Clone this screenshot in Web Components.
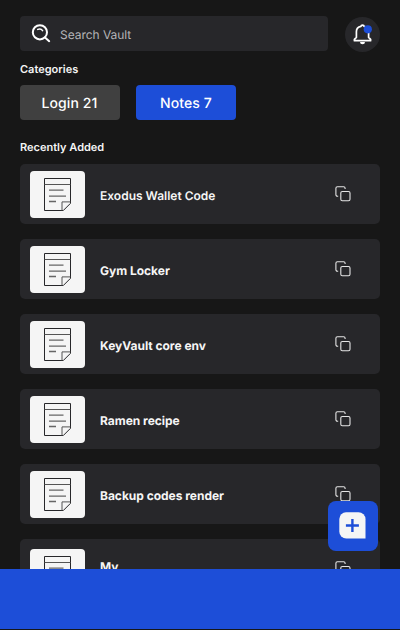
<!DOCTYPE html>
<html lang="en">
<head>
<meta charset="utf-8">
<title>Vault</title>
<style>
html,body{margin:0;height:100%;background:#171717;overflow:hidden}
body{font-family:Inter,"Liberation Sans",sans-serif;color:#f5f5f5;text-rendering:geometricPrecision}
</style>
</head>
<body>
<vault-app></vault-app>
<script>
const define = (name, html) => {
  const t = document.createElement('template');
  t.innerHTML = html;
  customElements.define(name, class extends HTMLElement {
    constructor() {
      super();
      this.attachShadow({mode: 'open'}).append(t.content.cloneNode(true));
    }
  });
};

define('search-field', `<style>
:host{display:flex;align-items:center;box-sizing:border-box;width:308px;height:35px;padding:2px 0 0 10px;gap:8px;background:#27272a;border-radius:4px;font-size:12px;letter-spacing:-.04px;line-height:16px;color:#b4b4b7}
svg{display:block;margin-top:-2px}
</style>
<svg width="22" height="22" viewBox="0 0 22 22" fill="none" stroke="#fff" stroke-width="2" stroke-linecap="round"><circle cx="9.9" cy="9.3" r="7.1"/><path d="M15 14.5l4.2 3.7"/><path d="M7.7 6.4Q10.8 5 12.6 7.6" stroke-width="1.5"/></svg>
<span><slot></slot></span>`);

define('bell-button', `<style>
:host{display:block;width:35px;height:35px;border-radius:50%;background:#27272a}
svg{display:block}
</style>
<svg width="35" height="35" viewBox="0 0 35 35"><path d="M9.4 23.7v-1.3l2-2v-5.7c0-3.4 2.2-5 4.5-5.4 .2-1.6 3-1.6 3.2 0 2.5.6 4.5 2.4 4.5 5.4v5.7l2 2v1.3z" fill="none" stroke="#fff" stroke-width="1.7" stroke-linejoin="round"/><path d="M15 25h5a2.5 2.2 0 0 1-5 0z" fill="#fff"/><circle cx="22.8" cy="12.3" r="4.1" fill="#1d4ed8"/></svg>`);

define('section-title', `<style>
:host{display:block;font-size:11px;font-weight:600;line-height:14px}
</style><slot></slot>`);

define('category-chip', `<style>
:host{display:flex;align-items:center;justify-content:center;box-sizing:border-box;width:100px;height:35px;padding:3px 1px 0 0;border-radius:4px;background:#404040;font-size:14px;font-weight:450;letter-spacing:.1px;line-height:20px;color:#fff}
:host([active]){background:#1d4ed8;padding-right:0}
</style><span><slot></slot></span>`);

define('note-thumb', `<style>
:host{display:block;width:55px;height:47px;border-radius:4px;background:#f5f5f5}
svg{display:block}
</style>
<svg width="55" height="47" viewBox="0 0 55 47" fill="none" stroke="#27272a"><path d="M14.5 7.5h26v24.8l-7.2 7.2H14.5z"/><path d="M14.5 13.5h26" stroke="#555"/><path d="M19 19.2h14.5M19 25.2h17M19 30.5h7" stroke="#666" stroke-width="1.3"/><path d="M32 39.5v-8.6h8.5" stroke="#555"/></svg>`);

define('copy-icon', `<style>:host{display:block}svg{display:block}</style>
<svg width="16" height="16" viewBox="0 0 16 16" fill="none" stroke="#e5e5e5" stroke-width="1.1"><rect x="5.8" y="5.5" width="9.2" height="9.3" rx="1.5"/><path d="M3.2 10.2H2.4A1.5 1.5 0 0 1 .9 8.7V2.2A1.5 1.5 0 0 1 2.4.7h6.2a1.5 1.5 0 0 1 1.5 1.5V3"/></svg>`);

define('vault-item', `<style>
:host{display:grid;grid-template-columns:55px 1fr 16px;column-gap:15px;align-items:start;box-sizing:border-box;height:60px;padding:7px 29px 0 10px;background:#27272a;border-radius:5px}
.label{font-size:12px;font-weight:700;letter-spacing:-.02px;line-height:16px;padding-top:17px;white-space:nowrap}
:host([light]) .label{font-weight:600;letter-spacing:0}
:host([raised]) .label{padding-top:13px}
:host([raised]) note-thumb{margin-top:2.5px}
copy-icon{padding-top:15px}
</style>
<note-thumb></note-thumb><div class="label"><slot></slot></div><copy-icon></copy-icon>`);

define('add-button', `<style>
:host{display:block;width:50px;height:50px;border-radius:8px;background:#1d4ed8}
svg{display:block}
</style>
<svg width="50" height="50" viewBox="0 0 50 50"><path d="M18 11.3h12.5a7 7 0 0 1 7 7v19.2H18.3a7 7 0 0 1-7-7V18a7 7 0 0 1 6.7-6.7z" fill="#f5f5f5"/><path d="M24.4 18v13M17.9 24.5h13" stroke="#1d4ed8" stroke-width="2.4"/></svg>`);

define('vault-app', `<style>
:host{display:grid;grid-template-rows:569px 60px;width:400px;height:630px;position:relative;background:#171717}
main{padding:16px 20px 0;box-sizing:border-box;overflow:hidden}
.top{display:flex;justify-content:space-between;height:36px}
bell-button{margin-top:1px}
.cat{margin-top:10px}
.chips{display:flex;gap:16px;margin:9px 0 20px}
.list{display:grid;gap:15px;margin-top:10px}
nav{background:#1d4ed8}
add-button{position:absolute;left:328px;top:501px}
</style>
<main>
<div class="top"><search-field>Search Vault</search-field><bell-button></bell-button></div>
<section-title class="cat">Categories</section-title>
<div class="chips"><category-chip>Login 21</category-chip><category-chip active>Notes 7</category-chip></div>
<section-title>Recently Added</section-title>
<div class="list">
<vault-item light>Exodus Wallet Code</vault-item>
<vault-item>Gym Locker</vault-item>
<vault-item>KeyVault core env</vault-item>
<vault-item>Ramen recipe</vault-item>
<vault-item>Backup codes render</vault-item>
<vault-item raised>My</vault-item>
</div>
</main>
<nav></nav>
<add-button></add-button>`);
</script>
</body>
</html>
